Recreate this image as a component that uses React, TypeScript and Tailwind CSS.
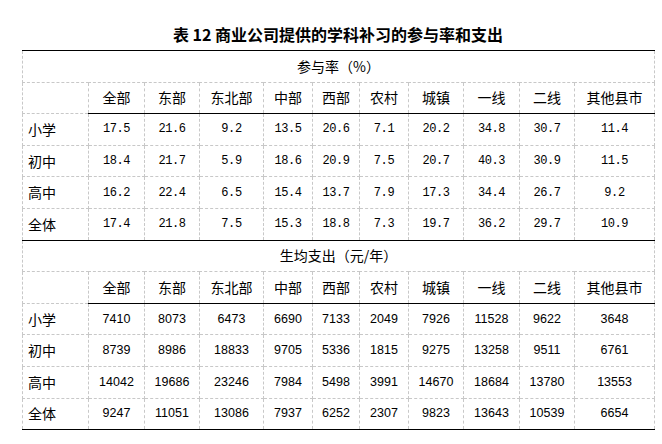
import React from "react";

const cols = ["全部", "东部", "东北部", "中部", "西部", "农村", "城镇", "一线", "二线", "其他县市"];
const widths = ["w-[66px]", "w-[56px]", "w-[55px]", "w-[64px]", "w-[49px]", "w-[47px]", "w-[49px]", "w-[55px]", "w-[56px]", "w-[55px]", "w-[80px]"];

const rate: [string, string[]][] = [
  ["小学", ["17.5", "21.6", "9.2", "13.5", "20.6", "7.1", "20.2", "34.8", "30.7", "11.4"]],
  ["初中", ["18.4", "21.7", "5.9", "18.6", "20.9", "7.5", "20.7", "40.3", "30.9", "11.5"]],
  ["高中", ["16.2", "22.4", "6.5", "15.4", "13.7", "7.9", "17.3", "34.4", "26.7", "9.2"]],
  ["全体", ["17.4", "21.8", "7.5", "15.3", "18.8", "7.3", "19.7", "36.2", "29.7", "10.9"]],
];

const cost: [string, string[]][] = [
  ["小学", ["7410", "8073", "6473", "6690", "7133", "2049", "7926", "11528", "9622", "3648"]],
  ["初中", ["8739", "8986", "18833", "9705", "5336", "1815", "9275", "13258", "9511", "6761"]],
  ["高中", ["14042", "19686", "23246", "7984", "5498", "3991", "14670", "18684", "13780", "13553"]],
  ["全体", ["9247", "11051", "13086", "7937", "6252", "2307", "9823", "13643", "10539", "6654"]],
];

const cjk = "[font-family:'Noto_Sans_CJK_SC',sans-serif]";
const base = "border border-dashed border-[#c8c8c8] p-0 h-[31.6px]";

function Section({ title, rows, mono }: { title: string; rows: [string, string[]][]; mono: boolean }) {
  return (
    <>
      <tr>
        <td colSpan={11} className={`${base} [border-top:1px_solid_#000] text-center text-[14px] ${cjk}`}>
          {title}
        </td>
      </tr>
      <tr>
        <td className={base}></td>
        {cols.map((c) => (
          <td key={c} className={`${base} [border-bottom:1px_solid_#000] text-center text-[14px] ${cjk}`}>
            {c}
          </td>
        ))}
      </tr>
      {rows.map(([label, vals], i) => {
        const last = i === rows.length - 1 ? "[border-bottom:1px_solid_#000]" : "";
        return (
          <tr key={label}>
            <td className={`${base} ${last} text-left pl-[5px] text-[14px] ${cjk}`}>{label}</td>
            {vals.map((v, j) => (
              <td
                key={j}
                className={`${base} ${last} text-center ${
                  mono
                    ? "[font-family:'Liberation_Mono',monospace] text-[12px] tracking-[-0.4px]"
                    : "[font-family:'Liberation_Sans',sans-serif] text-[12.5px]"
                }`}
              >
                {v}
              </td>
            ))}
          </tr>
        );
      })}
    </>
  );
}

export default function App() {
  return (
    <div className="w-[662px] h-[444px] bg-white text-black overflow-hidden">
      <div className={`ml-[22px] w-[632px] h-[50px] pt-[24px] text-center text-[16px] leading-[20px] font-bold ${cjk}`}>
        表 12 商业公司提供的学科补习的参与率和支出
      </div>
      <table className="ml-[22px] w-[632px] table-fixed border-collapse">
        <colgroup>
          {widths.map((w, i) => (
            <col key={i} className={w} />
          ))}
        </colgroup>
        <tbody>
          <Section title="参与率（%）" rows={rate} mono={true} />
          <Section title="生均支出（元/年）" rows={cost} mono={false} />
        </tbody>
      </table>
    </div>
  );
}
